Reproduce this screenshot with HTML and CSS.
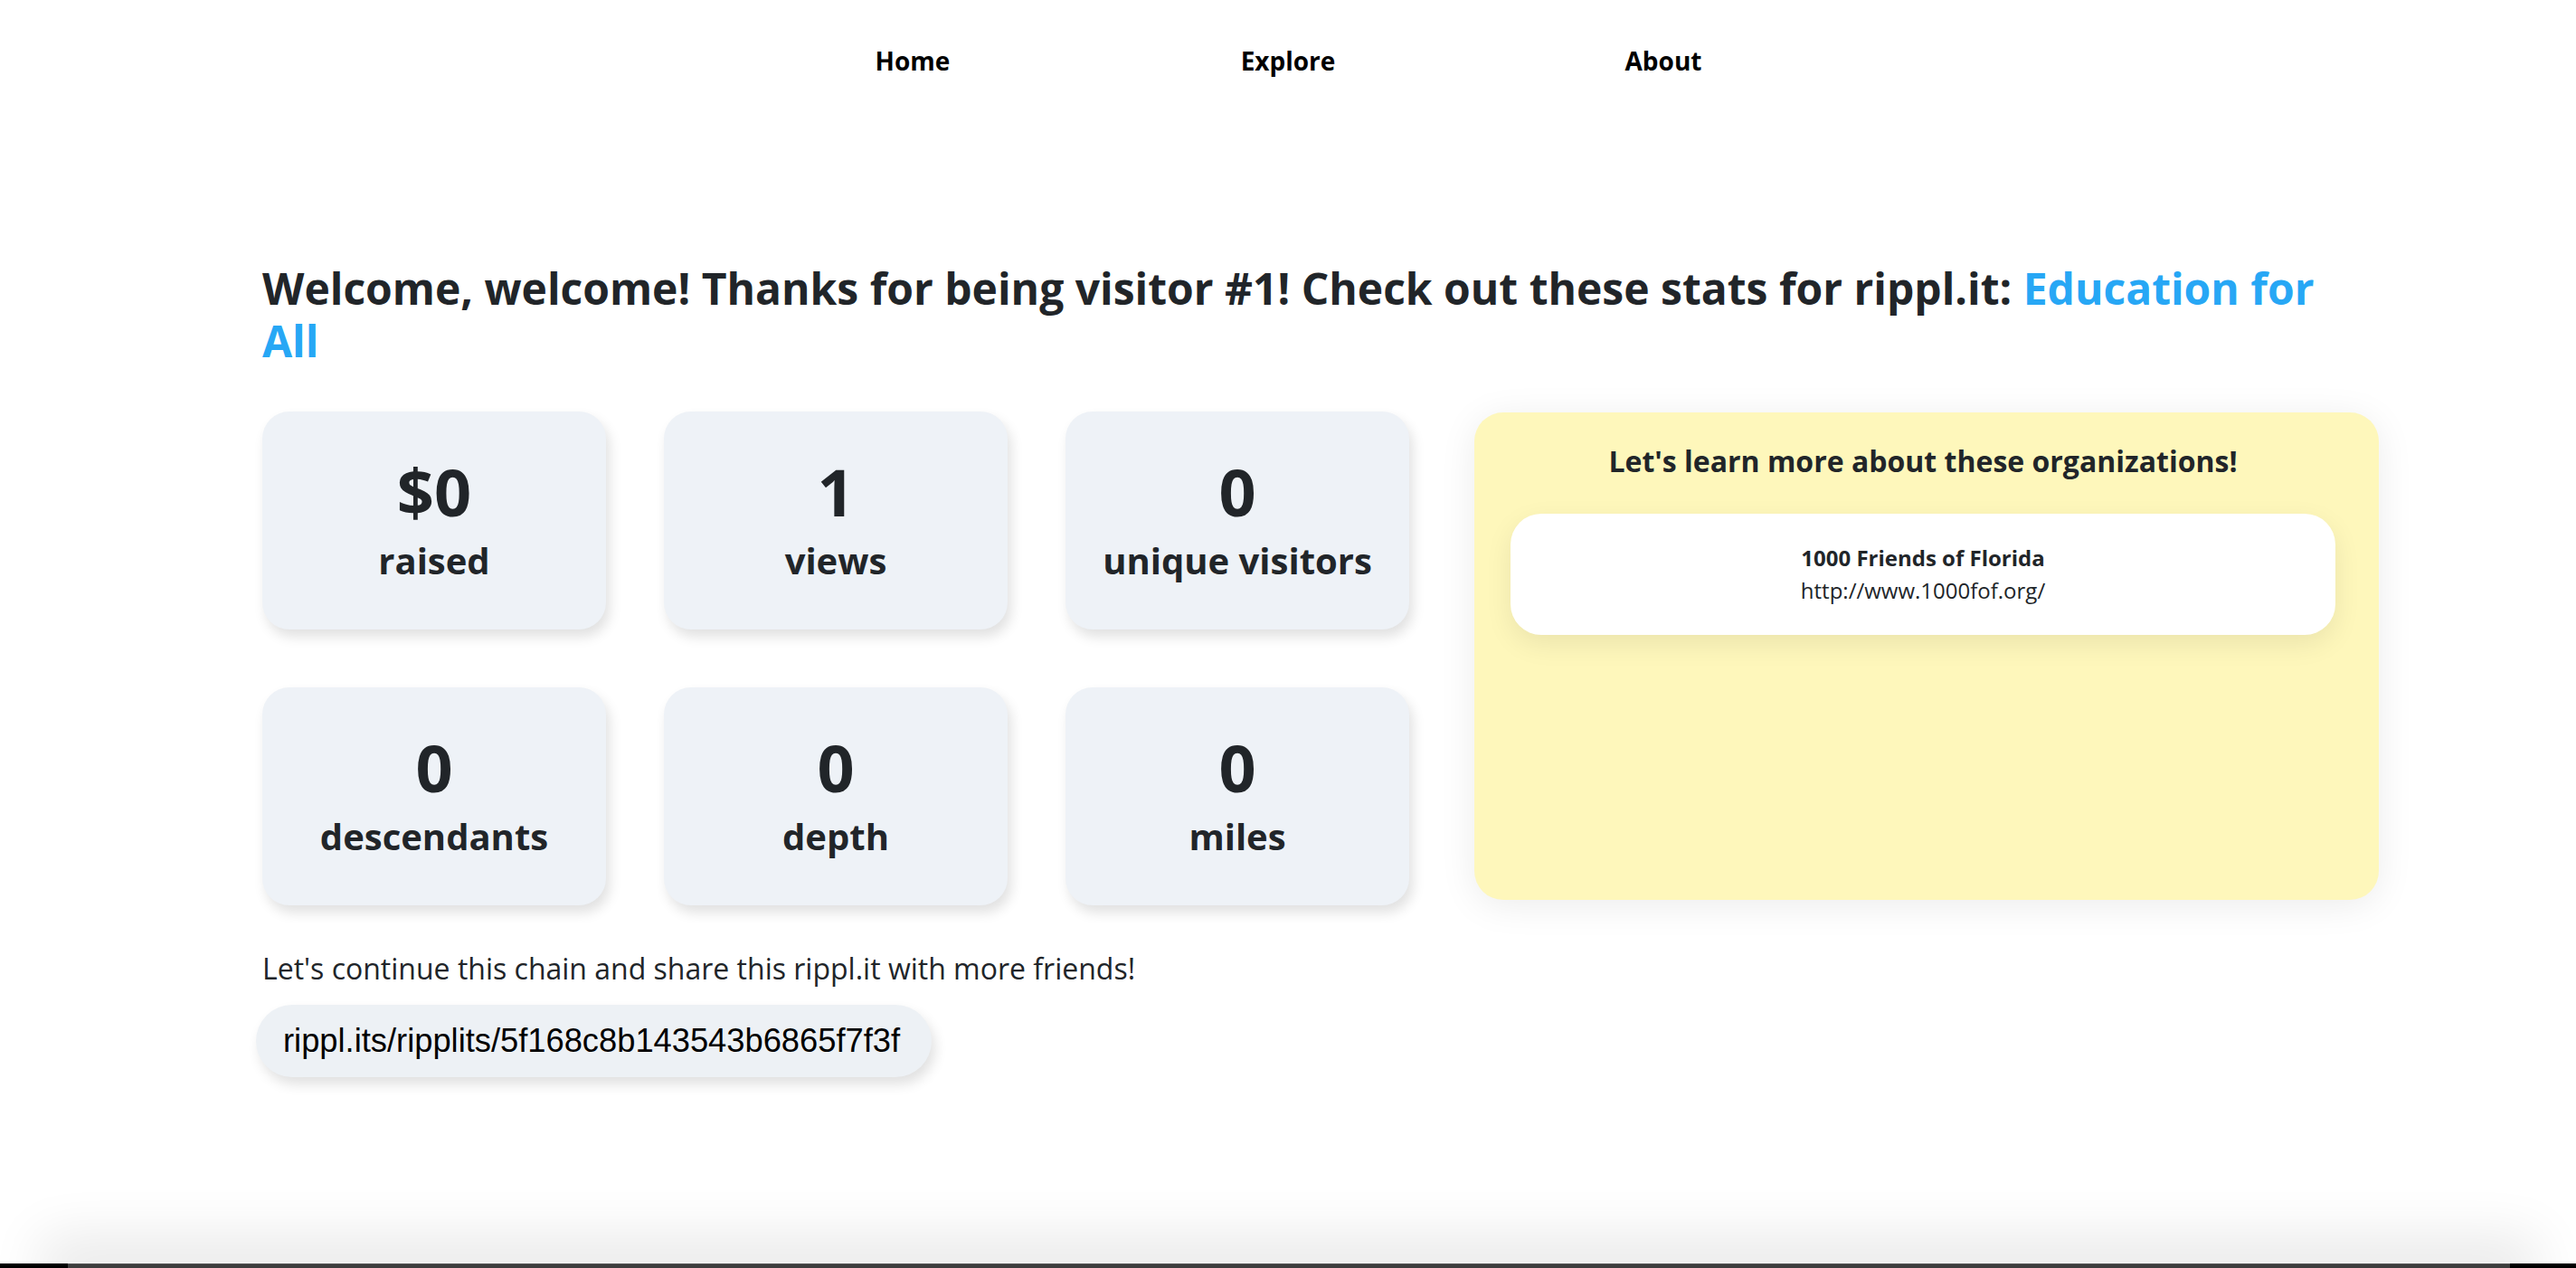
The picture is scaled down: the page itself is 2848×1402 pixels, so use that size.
FILE: index.html
```html
<!DOCTYPE html>
<html lang="en">
<head>
<meta charset="utf-8">
<title>rippl.it</title>
<link rel="stylesheet" href="styles.css">
</head>
<body>
<div class="page">
  <nav class="nav">
    <a class="nav-link" href="#">Home</a>
    <a class="nav-link" href="#">Explore</a>
    <a class="nav-link" href="#">About</a>
  </nav>

  <main class="main">
    <h1 class="title">Welcome, welcome! Thanks for being visitor #1! Check out these stats for rippl.it: <span class="accent">Education for All</span></h1>

    <div class="content">
      <div class="stats">
        <div class="stat"><div class="stat-num">$0</div><div class="stat-label">raised</div></div>
        <div class="stat"><div class="stat-num">1</div><div class="stat-label">views</div></div>
        <div class="stat"><div class="stat-num">0</div><div class="stat-label">unique visitors</div></div>
        <div class="stat"><div class="stat-num">0</div><div class="stat-label">descendants</div></div>
        <div class="stat"><div class="stat-num">0</div><div class="stat-label">depth</div></div>
        <div class="stat"><div class="stat-num">0</div><div class="stat-label">miles</div></div>
      </div>

      <aside class="orgs">
        <h2 class="orgs-title">Let's learn more about these organizations!</h2>
        <div class="org">
          <div class="org-name">1000 Friends of Florida</div>
          <div class="org-url">http://www.1000fof.org/</div>
        </div>
      </aside>
    </div>

    <p class="share">Let's continue this chain and share this rippl.it with more friends!</p>
    <div class="chip">rippl.its/ripplits/5f168c8b143543b6865f7f3f</div>
  </main>

  <footer class="footer"><div class="footer-bar"></div></footer>
</div>
</body>
</html>
```

FILE: styles.css
```css
* { box-sizing: border-box; }

html, body {
  margin: 0;
  padding: 0;
  background: #ffffff;
}

body {
  font-family: "Open Sans", "DejaVu Sans", sans-serif;
  color: #212529;
}

.page {
  min-height: 100vh;
  display: flex;
  flex-direction: column;
  overflow: hidden;
}

.nav {
  display: flex;
  justify-content: center;
  padding-top: 46px;
}

.nav-link {
  width: 415px;
  text-align: center;
  font-size: 28px;
  line-height: 42px;
  font-weight: 700;
  color: #000000;
  text-decoration: none;
}

.main {
  width: 2340px;
  margin-left: 290px;
}

.title {
  margin: 202px 0 0 0;
  font-size: 48px;
  line-height: 1.2;
  font-weight: 700;
  color: #212529;
}

.accent { color: #27a7f5; }

.content {
  display: flex;
  align-items: flex-start;
  gap: 72px;
  margin-top: 50px;
}

.stats {
  display: grid;
  grid-template-columns: repeat(3, 380px);
  grid-auto-rows: 241px;
  gap: 64px;
}

.stat {
  background: #eef2f7;
  border-radius: 30px;
  box-shadow: 4px 8px 14px rgba(0, 0, 0, 0.12);
  padding-top: 40px;
  text-align: center;
}

.stat-num {
  font-size: 72px;
  line-height: 96px;
  font-weight: 700;
}

.stat-label {
  margin-top: 5px;
  font-size: 40px;
  line-height: 48px;
  font-weight: 700;
}

.orgs {
  width: 1000px;
  height: 539px;
  margin-top: 1px;
  background: #fef7bb;
  border-radius: 32px;
  box-shadow: 0 6px 40px rgba(0, 0, 0, 0.08);
  padding: 35px 48px 0 40px;
}

.orgs-title {
  margin: 0;
  text-align: center;
  font-size: 32px;
  line-height: 1.2;
  font-weight: 700;
}

.org {
  margin-top: 38px;
  background: #ffffff;
  border-radius: 34px;
  box-shadow: 0 10px 30px rgba(0, 0, 0, 0.08);
  padding: 31px 20px;
  text-align: center;
  font-size: 24px;
  line-height: 36px;
}

.org-name { font-weight: 700; }
.org-url { font-weight: 400; }

.share {
  margin: 48px 0 0 0;
  font-size: 32px;
  line-height: 44px;
  font-weight: 400;
}

.chip {
  display: inline-flex;
  align-items: center;
  height: 80px;
  margin: 18px 0 0 -7px;
  padding: 0 35px 0 30px;
  border-radius: 40px;
  background: #edf1f5;
  box-shadow: 4px 8px 14px rgba(0, 0, 0, 0.12);
  font-family: "Liberation Sans", Arial, sans-serif;
  font-size: 36.3px;
  line-height: 1;
  color: #000000;
}

.footer {
  margin-top: auto;
  height: 5px;
  background: #000000;
}

.footer-bar {
  height: 5px;
  margin: 0 73px 0 75px;
  background: #3d3d3d;
  border-top: 1px solid #555555;
  box-shadow: 0 0 60px 30px rgba(0, 0, 0, 0.09);
}
```
